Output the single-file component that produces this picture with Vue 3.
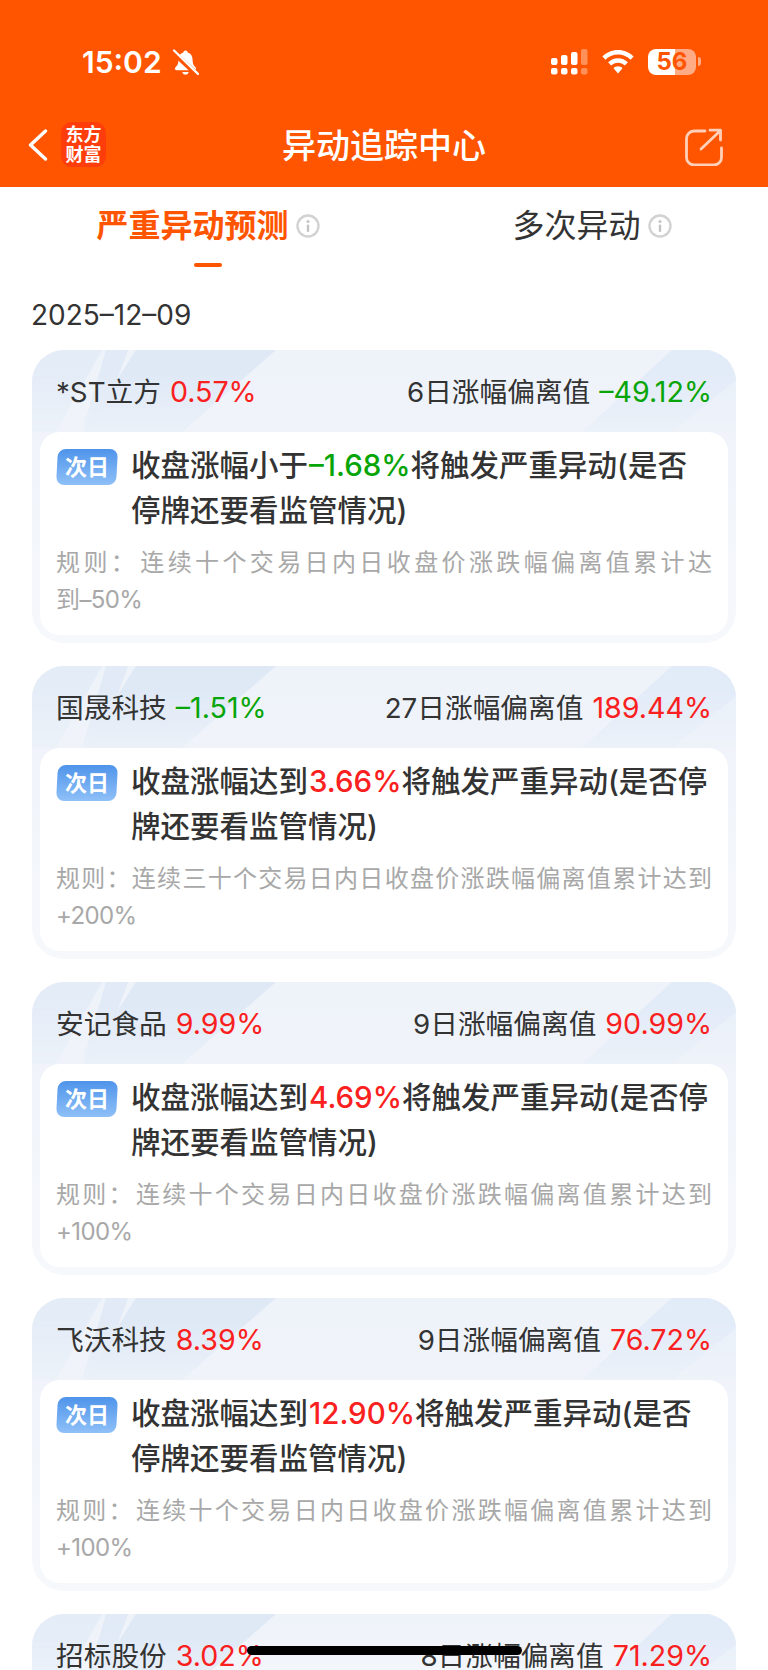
<script setup>
// 严重异动预测列表：每张卡片的涨跌色由 up/down 决定
const cards = [
  {
    name: '*ST立方', pct: '0.57%', pctType: 'up', days: '6', dev: '–49.12%', devType: 'down',
    before: '收盘涨幅小于', value: '–1.68%', valueType: 'down',
    after: '将触发严重异动(是否停牌还要看监管情况)',
    rule: '规则： 连续十个交易日内日收盘价涨跌幅偏离值累计达', tail: '到–50%',
  },
  {
    name: '国晟科技', pct: '–1.51%', pctType: 'down', days: '27', dev: '189.44%', devType: 'up',
    before: '收盘涨幅达到', value: '3.66%', valueType: 'up',
    after: '将触发严重异动(是否停牌还要看监管情况)',
    rule: '规则：连续三十个交易日内日收盘价涨跌幅偏离值累计达到', tail: '+200%',
  },
  {
    name: '安记食品', pct: '9.99%', pctType: 'up', days: '9', dev: '90.99%', devType: 'up',
    before: '收盘涨幅达到', value: '4.69%', valueType: 'up',
    after: '将触发严重异动(是否停牌还要看监管情况)',
    rule: '规则： 连续十个交易日内日收盘价涨跌幅偏离值累计达到', tail: '+100%',
  },
  {
    name: '飞沃科技', pct: '8.39%', pctType: 'up', days: '9', dev: '76.72%', devType: 'up',
    before: '收盘涨幅达到', value: '12.90%', valueType: 'up',
    after: '将触发严重异动(是否停牌还要看监管情况)',
    rule: '规则： 连续十个交易日内日收盘价涨跌幅偏离值累计达到', tail: '+100%',
  },
  // 最后一张只露出顶部
  { name: '招标股份', pct: '3.02%', pctType: 'up', days: '8', dev: '71.29%', devType: 'up' },
]
</script>

<template>
  <div class="page">
    <header class="top">
      <div class="status">
        <div class="status-left">
          <span class="time">15:02</span>
          <svg class="bell" viewBox="0 0 26 26" aria-hidden="true">
            <path d="M13 1.500c-1.200 0-2 .8-2.100 1.900C7.800 4.200 6.200 7 6.200 10.200c0 3.600-.7 5.400-2.400 7-.7.7-1 1.300-1 1.900 0 .9.7 1.400 1.700 1.400h17c1 0 1.700-.5 1.700-1.400 0-.6-.3-1.200-1-1.900-1.700-1.600-2.400-3.400-2.400-7 0-3.200-1.600-6-4.700-6.800C15 2.300 14.200 1.500 13 1.500z" fill="#fff"/>
            <path d="M9.800 22.200a3.300 3.300 0 0 0 6.400 0z" fill="#fff"/>
            <path d="M1.500 3.500 24.500 25" stroke="#ff5500" stroke-width="5"/>
            <path d="M2 1.500 25 24" stroke="#fff" stroke-width="2.200" stroke-linecap="round"/>
          </svg>
        </div>
        <div class="status-right">
          <svg class="signal" viewBox="0 0 37 26" aria-hidden="true">
            <g fill="#fff">
              <rect x="0" y="9" width="6.500" height="7" rx="2"/>
              <rect x="10" y="6" width="6.500" height="10" rx="2"/>
              <rect x="20" y="3" width="6.500" height="13" rx="2"/>
              <rect x="0" y="19" width="6.500" height="6.500" rx="2"/>
              <rect x="10" y="19" width="6.500" height="6.500" rx="2"/>
              <rect x="20" y="19" width="6.500" height="6.500" rx="2"/>
            </g>
            <g fill="#fff" opacity=".35">
              <rect x="30" y="0" width="6.500" height="16" rx="2"/>
              <rect x="30" y="19" width="6.500" height="6.500" rx="2"/>
            </g>
          </svg>
          <svg class="wifi" viewBox="0 0 32 24" aria-hidden="true">
            <path d="M16 0C9.900 0 4.400 2.500.4 6.500l3 3.300C6.600 6.500 11 4.500 16 4.500s9.400 2 12.600 5.300l3-3.300C27.600 2.500 22.100 0 16 0z" fill="#fff"/>
            <path d="M16 8.200c-3.900 0-7.400 1.600-9.900 4.100l3 3.300c1.800-1.800 4.200-2.900 6.900-2.900s5.100 1.100 6.900 2.900l3-3.300c-2.500-2.500-6-4.100-9.900-4.100z" fill="#fff"/>
            <path d="M16 16.300c-1.800 0-3.400.7-4.500 1.900L16 23.500l4.500-5.300c-1.100-1.200-2.700-1.900-4.500-1.900z" fill="#fff"/>
          </svg>
          <div class="battery">
            <span class="battery-level">56</span>
          </div>
        </div>
      </div>

      <div class="nav">
        <div class="nav-left">
          <svg class="back" viewBox="0 0 20 32" aria-hidden="true">
            <path d="M17.500 2 2.500 16l15 14" fill="none" stroke="#fff" stroke-width="3.400" stroke-linecap="round" stroke-linejoin="round"/>
          </svg>
          <div class="logo">东方<br>财富</div>
        </div>
        <h1>异动追踪中心</h1>
        <svg class="share" viewBox="0 0 38 38" aria-hidden="true">
          <path d="M20 3H9a7.500 7.500 0 0 0-7.500 7.500v19A7.500 7.500 0 0 0 9 37h20a7.500 7.500 0 0 0 7.500-7.500V20" fill="none" stroke="#fff" stroke-opacity=".72" stroke-width="2.800" stroke-linecap="round"/>
          <path d="M16 21 35 3M25 2.200h10.500V12" fill="none" stroke="#fff" stroke-opacity=".72" stroke-width="2.800" stroke-linecap="round" stroke-linejoin="round"/>
        </svg>
      </div>
    </header>

    <nav class="tabs">
      <div class="tab active">
        <span>严重异动预测</span>
        <svg class="info" viewBox="0 0 24 24" aria-hidden="true">
          <circle cx="12" cy="12" r="10.500" fill="none" stroke="#d2d2d2" stroke-width="2.400"/>
          <circle cx="12" cy="7.500" r="1.500" fill="#c4c4c4"/>
          <rect x="10.800" y="10.500" width="2.400" height="7.500" rx="1" fill="#c4c4c4"/>
        </svg>
      </div>
      <div class="tab">
        <span>多次异动</span>
        <svg class="info" viewBox="0 0 24 24" aria-hidden="true">
          <circle cx="12" cy="12" r="10.500" fill="none" stroke="#d2d2d2" stroke-width="2.400"/>
          <circle cx="12" cy="7.500" r="1.500" fill="#c4c4c4"/>
          <rect x="10.800" y="10.500" width="2.400" height="7.500" rx="1" fill="#c4c4c4"/>
        </svg>
      </div>
    </nav>

    <div class="date">2025–12–09</div>

    <section class="list">
      <article v-for="card in cards" :key="card.name" class="card">
        <svg class="streaks" viewBox="0 0 704 82" preserveAspectRatio="none" aria-hidden="true">
          <path d="M0 0h70L24 82H0z" fill="#dde8f5" opacity=".55"/>
          <path d="M74 0h22L74 60 50 82z" fill="#dbe7f5" opacity=".7"/>
          <path d="M104 0h140L150 82H52z" fill="#dfe9f6"/>
          <path d="M550 82 640 0h64v82z" fill="#e2ebf8"/>
          <path d="M640 82 704 30v52z" fill="#eaf0f9"/>
        </svg>
        <div class="row">
          <div class="row-side">
            <span>{{ card.name }}</span>
            <span class="pct" :class="card.pctType">{{ card.pct }}</span>
          </div>
          <div class="row-side">
            <span>{{ card.days }}日涨幅偏离值</span>
            <span class="pct" :class="card.devType">{{ card.dev }}</span>
          </div>
        </div>
        <div v-if="card.before" class="body">
          <div class="headline">
            <span class="badge"><span>次日</span></span>
            <p class="title">{{ card.before }}<span class="value" :class="card.valueType">{{ card.value }}</span>{{ card.after }}</p>
          </div>
          <p class="rule">{{ card.rule }}<span class="tail">{{ card.tail }}</span></p>
        </div>
      </article>
    </section>

    <div class="home-bar"></div>
  </div>
</template>

<style>
html, body {
  margin: 0;
  background: #fff;
}
</style>

<style scoped>
.page {
  position: relative;
  width: 768px;
  height: 1670px;
  overflow: hidden;
  background: #fff;
  color: #333;
  font-family: Inter, "Noto Sans CJK SC", sans-serif;
}

.top {
  height: 187px;
  background: #ff5500;
  color: #fff;
  display: flex;
  flex-direction: column;
}

.status {
  height: 122px;
  display: flex;
  justify-content: space-between;
  padding: 49px 72px 0 82px;
  box-sizing: border-box;
}

.status-left {
  display: flex;
  align-items: flex-start;
  gap: 10px;
}

.time {
  font-size: 30px;
  font-weight: 600;
  line-height: 26px;
}

.bell {
  width: 27px;
  height: 27px;
}

.status-right {
  display: flex;
  align-items: flex-start;
  gap: 14px;
}

.signal {
  width: 37px;
  height: 26px;
}

.wifi {
  width: 32px;
  height: 24px;
  margin-top: 1px;
}

.battery {
  position: relative;
  width: 48px;
  height: 26px;
  border-radius: 8px;
  background: linear-gradient(90deg, #fff 56%, #ffab85 56%);
  color: #ff5500;
  font-size: 24px;
  font-weight: 700;
  line-height: 26px;
  text-align: center;
}

.battery::after {
  content: "";
  position: absolute;
  right: -5px;
  top: 8px;
  width: 3px;
  height: 9px;
  border-radius: 0 3px 3px 0;
  background: #ffab85;
}

.battery-level {
  display: block;
}

.nav {
  position: relative;
  height: 65px;
  display: flex;
  align-items: flex-start;
  justify-content: space-between;
  padding: 0 45px 0 28px;
}

.nav-left {
  display: flex;
  align-items: center;
  gap: 13px;
}

.back {
  width: 20px;
  height: 32px;
}

.logo {
  width: 45px;
  height: 45px;
  border-radius: 11px;
  background: #ff3d0a;
  font-size: 18px;
  font-weight: 700;
  line-height: 20px;
  text-align: center;
  padding-top: 3px;
  box-sizing: border-box;
}

.nav h1 {
  position: absolute;
  left: 0;
  right: 0;
  top: 0;
  margin: 0;
  font-size: 34px;
  font-weight: 500;
  line-height: 48px;
  text-align: center;
}

.share {
  width: 38px;
  height: 38px;
  margin-top: 6px;
}

.tabs {
  display: grid;
  grid-template-columns: 352px 352px;
  gap: 32px;
  padding: 16px 32px 0;
}

.tab {
  position: relative;
  height: 46px;
  display: flex;
  align-items: center;
  justify-content: center;
  gap: 7px;
  font-size: 32px;
  line-height: 46px;
}

.tab.active {
  color: #ff5500;
  font-weight: 700;
}

.tab.active::after {
  content: "";
  position: absolute;
  left: 162px;
  top: 60px;
  width: 28px;
  height: 4px;
  border-radius: 2px;
  background: #ff5500;
}

.info {
  width: 24px;
  height: 24px;
}

.date {
  margin: 48px 0 0 31px;
  font-size: 28px;
  line-height: 36px;
}

.list {
  display: flex;
  flex-direction: column;
  gap: 23px;
  margin: 17px 32px 0;
}

.card {
  position: relative;
  border-radius: 32px;
  padding: 0 8px 8px;
  background: linear-gradient(180deg, #eef2f9 0%, #f0f4fa 30%, #f6f8fc 100%);
  overflow: hidden;
}

.streaks {
  position: absolute;
  left: 0;
  top: 0;
  width: 100%;
  height: 82px;
  -webkit-mask-image: linear-gradient(180deg, #000 30%, rgba(0, 0, 0, 0.25) 100%);
  mask-image: linear-gradient(180deg, #000 30%, rgba(0, 0, 0, 0.25) 100%);
}

.row {
  position: relative;
  height: 82px;
  display: flex;
  align-items: center;
  justify-content: space-between;
  padding: 0 16px 2px;
  box-sizing: border-box;
  font-size: 27.700px;
}

.row-side {
  display: flex;
  align-items: baseline;
  gap: 9px;
}

.pct {
  font-size: 28.600px;
}

.up {
  color: #fa2020;
}

.down {
  color: #08a508;
}

.body {
  position: relative;
  height: 203px;
  box-sizing: border-box;
  padding: 11px 16px 0;
  border-radius: 20px;
  background: #fff;
}

.headline {
  display: flex;
  gap: 14px;
}

.badge {
  flex: none;
  width: 60px;
  height: 36px;
  margin-top: 6px;
  margin-left: 1px;
  border-radius: 8px;
  background: linear-gradient(180deg, #4f94ea 0%, #8fc0f8 100%);
  color: #fff;
  font-size: 22px;
  font-weight: 700;
  line-height: 36px;
  text-align: center;
  transform: skewX(-3deg);
}

.badge span {
  display: block;
  transform: skewX(3deg);
}

.title {
  margin: 0;
  font-size: 29.500px;
  font-weight: 500;
  line-height: 45px;
}

.value {
  margin-left: 1px;
}

.rule {
  margin: 11px 0 0;
  color: #a8a8a8;
  font-size: 24px;
  line-height: 37px;
  text-align: justify;
  word-spacing: -8px;
}

.tail {
  white-space: nowrap;
  letter-spacing: -0.6px;
}

.home-bar {
  position: absolute;
  left: 247px;
  bottom: 15px;
  width: 275px;
  height: 9px;
  border-radius: 5px;
  background: #000;
}
</style>
